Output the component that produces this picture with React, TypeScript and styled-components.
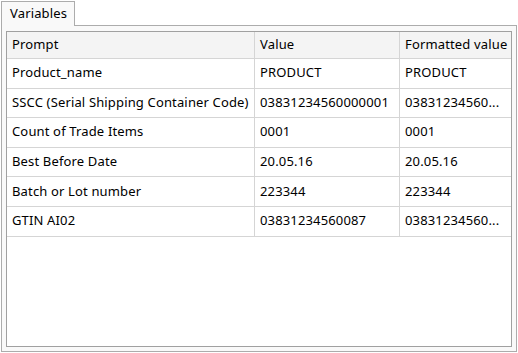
import React from 'react';
import styled, { createGlobalStyle } from 'styled-components';

const GlobalStyle = createGlobalStyle`
  html, body {
    margin: 0;
    padding: 0;
    background: #ffffff;
  }
  body {
    font-family: 'Noto Sans', 'Open Sans', sans-serif;
    font-size: 13px;
    letter-spacing: 0.15px;
    color: #000000;
  }
`;

const Frame = styled.div`
  width: 518px;
  height: 353px;
  box-sizing: border-box;
  padding: 1px;
  display: flex;
  flex-direction: column;
`;

const TabStrip = styled.div`
  display: flex;
  height: 24px;
`;

const Tab = styled.div`
  position: relative;
  z-index: 1;
  box-sizing: border-box;
  width: 74px;
  height: 25px;
  margin-bottom: -1px;
  padding: 2px 0 0 8px;
  border: 1px solid #acacac;
  border-bottom: none;
  background: #f9f9f9;
  line-height: 18px;
`;

const Panel = styled.div`
  flex: 1;
  box-sizing: border-box;
  border: 1px solid #acacac;
  background: #f9f9f9;
  padding: 5px 4px 4px 4px;
  display: flex;
  min-height: 0;
`;

const Grid = styled.div`
  flex: 1;
  box-sizing: border-box;
  border: 1px solid #a0a0a0;
  background: #ffffff;
  display: grid;
  grid-template-columns: 248px 145px 1fr;
  grid-template-rows: 27px;
  grid-auto-rows: 29.6px;
  align-content: start;
`;

const Cell = styled.div<{ $header?: boolean; $last?: boolean }>`
  box-sizing: border-box;
  padding: 0 5px 2px 5px;
  display: flex;
  align-items: center;
  white-space: nowrap;
  overflow: hidden;
  background: ${({ $header }) => ($header ? '#f4f4f4' : '#ffffff')};
  border-bottom: 1px solid #d5d5d5;
  border-right: ${({ $last }) => ($last ? 'none' : '1px solid #d5d5d5')};
`;

type Row = { prompt: string; value: string; formatted: string };

const rows: Row[] = [
  { prompt: 'Product_name', value: 'PRODUCT', formatted: 'PRODUCT' },
  { prompt: 'SSCC (Serial Shipping Container Code)', value: '03831234560000001', formatted: '03831234560...' },
  { prompt: 'Count of Trade Items', value: '0001', formatted: '0001' },
  { prompt: 'Best Before Date', value: '20.05.16', formatted: '20.05.16' },
  { prompt: 'Batch or Lot number', value: '223344', formatted: '223344' },
  { prompt: 'GTIN AI02', value: '03831234560087', formatted: '03831234560...' },
];

export default function App() {
  return (
    <Frame>
      <GlobalStyle />
      <TabStrip>
        <Tab>Variables</Tab>
      </TabStrip>
      <Panel>
        <Grid>
          <Cell $header>Prompt</Cell>
          <Cell $header>Value</Cell>
          <Cell $header $last>Formatted value</Cell>
          {rows.map((r) => (
            <React.Fragment key={r.prompt}>
              <Cell>{r.prompt}</Cell>
              <Cell>{r.value}</Cell>
              <Cell $last>{r.formatted}</Cell>
            </React.Fragment>
          ))}
        </Grid>
      </Panel>
    </Frame>
  );
}
